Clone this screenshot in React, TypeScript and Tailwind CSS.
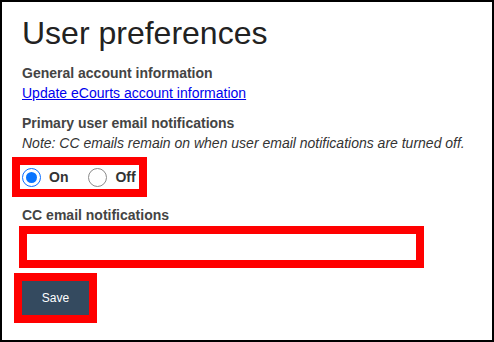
import React from 'react';

const Radio = ({ checked }: { checked?: boolean }) => {
  if (checked) {
    return (
      <span className="flex h-[19px] w-[19px] shrink-0 items-center justify-center rounded-full border-[1.5px] border-[#0a6cff] bg-white">
        <span className="h-[11px] w-[11px] rounded-full bg-[#0a74ff]" />
      </span>
    );
  }
  return <span className="block h-[19px] w-[19px] shrink-0 rounded-full border border-[#8a8a8a] bg-white" />;
};

const App = () => {
  return (
    <div className="h-[342px] w-[494px] border-2 border-black bg-white px-[20px] pt-[12px] font-['Liberation_Sans',Arial,sans-serif]">
      <h1 className="text-[32px] leading-[38px] text-[#222]">User preferences</h1>

      <div className="mt-[11px]">
        <p className="text-[14px] font-bold leading-[20px] text-[#444]">General account information</p>
        <a href="#" className="block text-[14px] leading-[20px] text-[#0000ee] underline">
          Update eCourts account information
        </a>
      </div>

      <div className="mt-[10px]">
        <p className="text-[14px] font-bold leading-[20px] text-[#444]">Primary user email notifications</p>
        <p className="text-[14px] italic leading-[20px] text-[#333]">
          Note: CC emails remain on when user email notifications are turned off.
        </p>
        <div className="mt-[4px] -ml-[10px] flex h-[40px] w-[135px] items-center border-8 border-[#ff0000] pl-[2px]">
          <Radio checked />
          <span className="ml-[8px] text-[14px] font-bold text-[#333]">On</span>
          <span className="ml-[20px]">
            <Radio />
          </span>
          <span className="ml-[8px] text-[14px] font-bold text-[#333]">Off</span>
        </div>
      </div>

      <div className="mt-[8px]">
        <p className="text-[14px] font-bold leading-[20px] text-[#444]">CC email notifications</p>
        <div className="mt-[1px] -ml-[3px] h-[42px] w-[405px] border-8 border-[#ff0000]">
          <input type="text" className="block h-full w-full bg-white outline-none" />
        </div>
      </div>

      <div className="mt-[5px] -ml-[8px] h-[50px] w-[83px] border-8 border-[#ff0000]">
        <button className="flex h-full w-full items-center justify-center bg-[#344a5f] text-[12px] text-white">
          Save
        </button>
      </div>
    </div>
  );
};

export default App;
